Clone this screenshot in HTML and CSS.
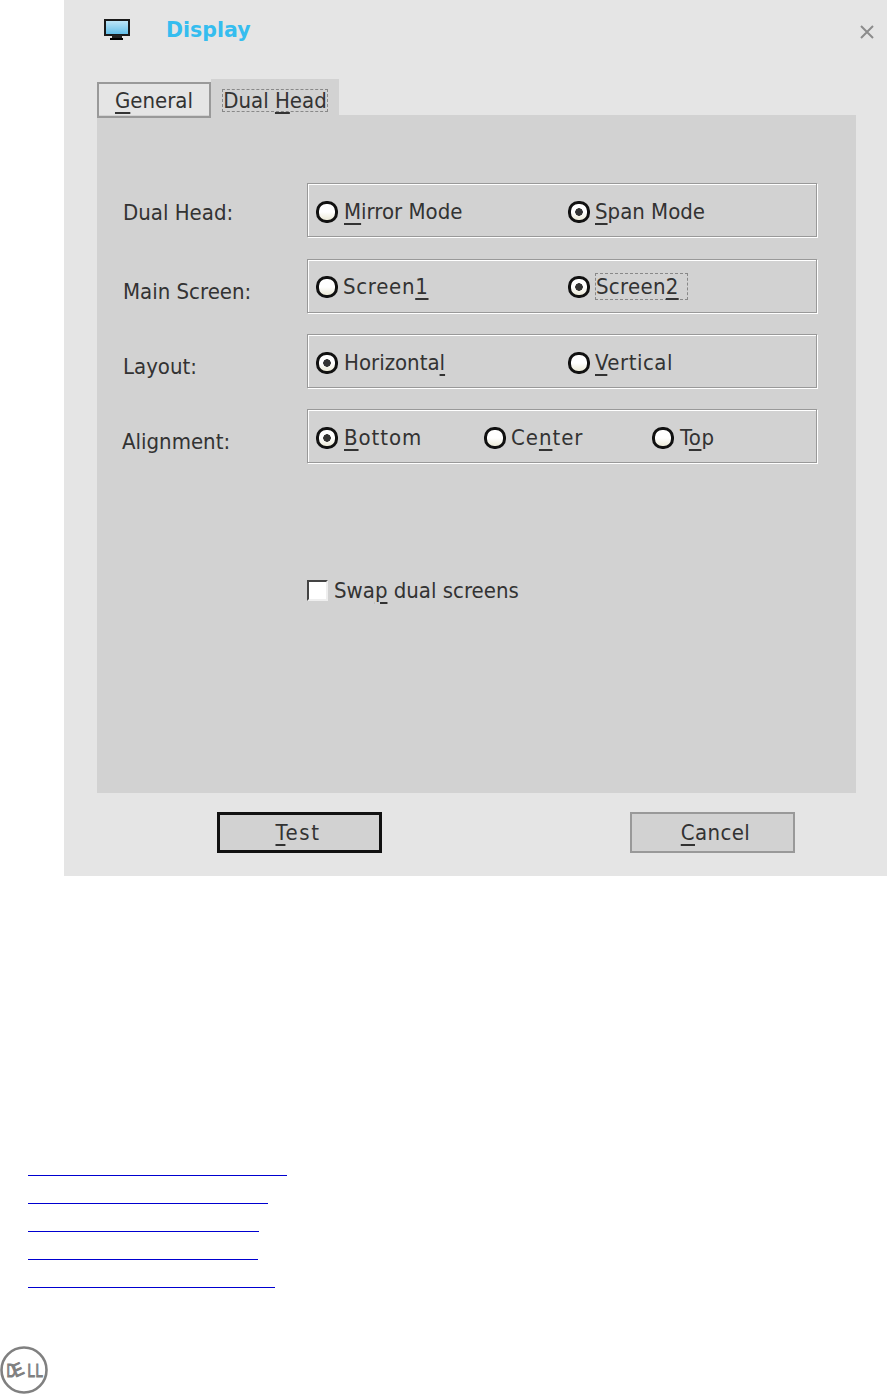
FILE: index.html
```html
<!DOCTYPE html>
<html lang="en">
<head>
  <meta charset="UTF-8" />
  <title>Display</title>
  <link rel="stylesheet" href="styles.css">
</head>
<body>

  <!-- DIALOG -->
  <div class="dialog">
    <div class="titlebar">
      <svg class="monitor" width="26" height="21" viewBox="0 0 26 21">
        <defs>
          <linearGradient id="screenFill" x1="0" y1="0" x2="0" y2="1">
            <stop offset="0" stop-color="#c4e8f8" />
            <stop offset="1" stop-color="#5cbce8" />
          </linearGradient>
        </defs>
        <rect x="1" y="1" width="24" height="15" fill="url(#screenFill)" stroke="#1a1a1a" stroke-width="2" />
        <rect x="8" y="16" width="10" height="3" fill="#222" />
        <rect x="6" y="19" width="13" height="2" fill="#000" />
      </svg>
      <span class="title">Display</span>
      <svg class="close" width="14" height="14" viewBox="0 0 14 14">
        <path d="M1 1 L13 13 M13 1 L1 13" stroke="#8c8c8c" stroke-width="2" fill="none" />
      </svg>
    </div>

    <!-- TABS -->
    <div class="tabs">
      <div class="tab"><u>G</u>eneral</div>
      <div class="tab active"><span class="focus">Dual <u>H</u>ead</span></div>
    </div>

    <div class="panel">
      <div class="form">
        <div class="label first">Dual Head:</div>
        <div class="group">
          <label class="option"><input class="radio" type="radio" name="mode" /><span><u>M</u>irror Mode</span></label>
          <label class="option pull"><input class="radio" type="radio" name="mode" checked /><span><u>S</u>pan Mode</span></label>
        </div>

        <div class="label shift">Main Screen:</div>
        <div class="group shift">
          <label class="option tight"><input class="radio" type="radio" name="main" /><span class="wide">Screen<u>1</u></span></label>
          <label class="option tight"><input class="radio" type="radio" name="main" checked /><span class="focus-inline">Screen<u>2</u></span></label>
        </div>

        <div class="label">Layout:</div>
        <div class="group">
          <label class="option"><input class="radio" type="radio" name="layout" checked /><span>Horizonta<u>l</u></span></label>
          <label class="option pull"><input class="radio" type="radio" name="layout" /><span class="wider"><u>V</u>ertical</span></label>
        </div>

        <div class="label alignment">Alignment:</div>
        <div class="group three">
          <label class="option"><input class="radio" type="radio" name="align" checked /><span class="widest"><u>B</u>ottom</span></label>
          <label class="option pull"><input class="radio" type="radio" name="align" /><span class="widest">Ce<u>n</u>ter</span></label>
          <label class="option"><input class="radio" type="radio" name="align" /><span class="wider">T<u>o</u>p</span></label>
        </div>
      </div>

      <label class="swap"><input class="check" type="checkbox" /><span>Swa<u>p</u> dual screens</span></label>
    </div>

    <div class="buttons">
      <button class="btn default"><u>T</u>est</button>
      <button class="btn cancel"><u>C</u>ancel</button>
    </div>
  </div>

  <!-- EMPTY LINKS -->
  <div class="links">
    <a class="link w1"></a>
    <a class="link w2"></a>
    <a class="link w3"></a>
    <a class="link w4"></a>
    <a class="link w5"></a>
  </div>

  <div class="logo">
    <svg width="48" height="48" viewBox="0 0 48 48">
      <circle cx="24" cy="24" r="22.5" fill="none" stroke="#808080" stroke-width="2.6" />
      <text class="logo-text" x="6.5" y="30.5" textLength="9.5" lengthAdjust="spacingAndGlyphs">D</text>
      <text class="logo-text" x="0" y="0" textLength="10.5" lengthAdjust="spacingAndGlyphs" transform="translate(15.5 31.5) rotate(-24)">E</text>
      <text class="logo-text" x="27.5" y="30.5" textLength="7.5" lengthAdjust="spacingAndGlyphs">L</text>
      <text class="logo-text" x="35.5" y="30.5" textLength="7.5" lengthAdjust="spacingAndGlyphs">L</text>
    </svg>
  </div>

</body>
</html>
```

FILE: styles.css
```css
body {
  margin: 0;
  background: #fff;
  font-family: "DejaVu Sans Condensed", "DejaVu Sans", sans-serif;
  font-stretch: condensed;
  font-size: 22px;
  color: #333;
}
u {
  text-underline-offset: 4px;
  text-decoration-thickness: 2px;
}

.dialog {
  margin-left: 64px;
  height: 876px;
  background: #e5e5e5;
  padding: 0 31px 0 33px;
  box-sizing: border-box;
}
.titlebar {
  height: 79px;
  display: flex;
  align-items: flex-start;
  padding-top: 19px;
  box-sizing: border-box;
}
.monitor {
  margin-left: 7px;
}
.title {
  margin-left: 36px;
  margin-top: -1px;
  font-family: "DejaVu Sans", sans-serif;
  font-stretch: normal;
  font-weight: bold;
  font-size: 20.5px;
  line-height: 24px;
  color: #35bdef;
}
.close {
  margin-left: auto;
  margin-top: 6px;
  margin-right: -18px;
}

.tabs {
  display: flex;
  align-items: flex-start;
  height: 36px;
}
.tab {
  width: 114px;
  height: 36px;
  margin-top: 3px;
  border: 2px solid #999;
  box-sizing: border-box;
  text-align: center;
  line-height: 34px;
}
.tab.active {
  width: 128px;
  margin-top: 0;
  border: 0;
  background: #d2d2d2;
  padding-top: 10px;
  line-height: 23px;
}
.focus {
  display: inline-block;
  border: 1px dashed #888;
  line-height: 21px;
}

.panel {
  height: 678px;
  background: #d2d2d2;
  padding: 68px 39px 0 26px;
  box-sizing: border-box;
}
.form {
  display: grid;
  grid-template-columns: 184px 510px;
  row-gap: 21px;
}
.label {
  padding-top: 21px;
  line-height: 24px;
}
.label.first {
  padding-top: 18px;
}
.label.alignment {
  margin-left: -1px;
}
.shift {
  margin-top: 1px;
}
.group {
  height: 54px;
  display: grid;
  grid-template-columns: 252px 1fr;
  align-items: center;
  padding: 3px 0 0 8px;
  border: 1px solid #999;
  box-shadow: inset 1px 1px 0 #fff, 1px 1px 0 #fff;
  box-sizing: border-box;
}
.group.shift {
  padding-top: 1px;
}
.group.three {
  grid-template-columns: 168px 168px 1fr;
}
.option {
  display: flex;
  align-items: center;
  gap: 6px;
}
.option.tight {
  gap: 5px;
}
.option.pull {
  gap: 5px;
}
.wide {
  letter-spacing: 0.7px;
}
.wider {
  letter-spacing: 0.5px;
}
.widest {
  letter-spacing: 0.95px;
}
.radio {
  appearance: none;
  width: 22px;
  height: 22px;
  margin: 0;
  border: 3px solid #111;
  border-radius: 46%;
  background: linear-gradient(#fff 50%, #ecead8);
  box-sizing: border-box;
}
.radio:checked {
  background: radial-gradient(circle, #333 3.5px, transparent 4px), linear-gradient(#fff 50%, #ecead8);
}
.focus-inline {
  border: 1px dashed #888;
  padding-right: 8px;
  line-height: 25px;
  letter-spacing: 0.3px;
}

.swap {
  display: flex;
  align-items: center;
  gap: 6px;
  margin: 115px 0 0 184px;
}
.check {
  appearance: none;
  width: 21px;
  height: 21px;
  margin: 0;
  background: #fff;
  border: 2px solid #eee;
  border-top-color: #444;
  border-left-color: #444;
  box-sizing: border-box;
}

.buttons {
  display: flex;
  gap: 248px;
  padding: 19px 0 0 120px;
}
.btn {
  width: 165px;
  height: 41px;
  padding: 0;
  font: inherit;
  color: #333;
  background: #d2d2d2;
  border: 2px solid #999;
  box-sizing: border-box;
}
.btn.default {
  padding-right: 3px;
  border: 3px solid #111;
  letter-spacing: 1.6px;
}
.btn.cancel {
  padding-left: 6px;
  letter-spacing: 0.4px;
}

.links {
  display: flex;
  flex-direction: column;
  align-items: flex-start;
  gap: 27px;
  margin: 299px 0 0 28px;
}
.link {
  display: block;
  height: 1px;
  background: #0000d0;
}
.w1 { width: 259px; }
.w2 { width: 240px; }
.w3 { width: 231px; }
.w4 { width: 230px; }
.w5 { width: 247px; }

.logo {
  margin-top: 58px;
  height: 48px;
  line-height: 0;
}
.logo-text {
  font-family: "Liberation Sans", sans-serif;
  font-stretch: normal;
  font-size: 18px;
  fill: #808080;
  stroke: #808080;
  stroke-width: 1;
}
```
